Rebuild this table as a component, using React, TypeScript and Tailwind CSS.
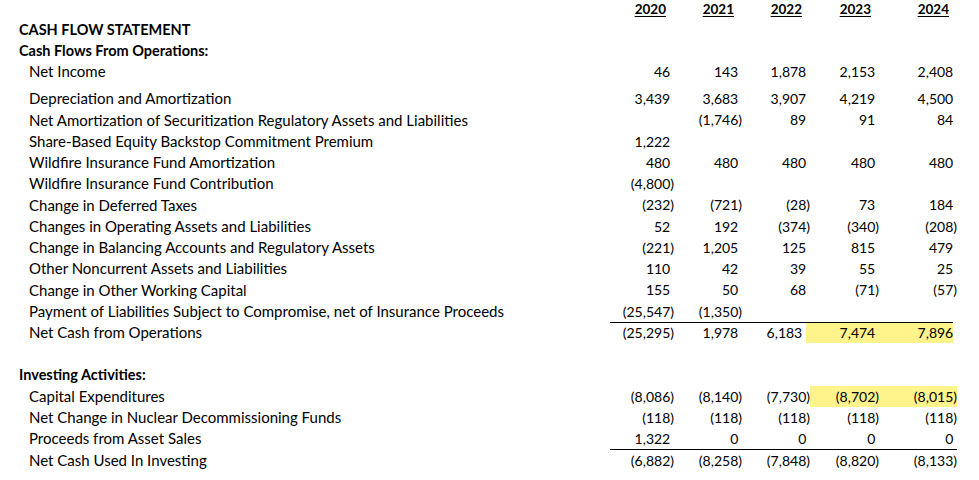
import React from 'react';

type Row = {
  label?: string;
  kind?: 'title' | 'item' | 'blank';
  values?: (string | null)[];
  lineAbove?: boolean;
  highlight?: 'ops' | 'capex';
  h?: string;
};

const rows: Row[] = [
  { label: 'CASH FLOW STATEMENT', kind: 'title', h: 'h-[21px]' },
  { label: 'Cash Flows From Operations:', kind: 'title', h: 'h-[21px]' },
  { label: 'Net Income', values: ['46', '143', '1,878', '2,153', '2,408'], h: 'h-[21px]' },
  { kind: 'blank', h: 'h-[6px]' },
  { label: 'Depreciation and Amortization', values: ['3,439', '3,683', '3,907', '4,219', '4,500'] },
  { label: 'Net Amortization of Securitization Regulatory Assets and Liabilities', values: [null, '(1,746)', '89', '91', '84'] },
  { label: 'Share-Based Equity Backstop Commitment Premium', values: ['1,222', null, null, null, null] },
  { label: 'Wildfire Insurance Fund Amortization', values: ['480', '480', '480', '480', '480'] },
  { label: 'Wildfire Insurance Fund Contribution', values: ['(4,800)', null, null, null, null] },
  { label: 'Change in Deferred Taxes', values: ['(232)', '(721)', '(28)', '73', '184'] },
  { label: 'Changes in Operating Assets and Liabilities', values: ['52', '192', '(374)', '(340)', '(208)'] },
  { label: 'Change in Balancing Accounts and Regulatory Assets', values: ['(221)', '1,205', '125', '815', '479'] },
  { label: 'Other Noncurrent Assets and Liabilities', values: ['110', '42', '39', '55', '25'] },
  { label: 'Change in Other Working Capital', values: ['155', '50', '68', '(71)', '(57)'] },
  { label: 'Payment of Liabilities Subject to Compromise, net of Insurance Proceeds', values: ['(25,547)', '(1,350)', null, null, null] },
  { label: 'Net Cash from Operations', values: ['(25,295)', '1,978', '6,183', '7,474', '7,896'], lineAbove: true, highlight: 'ops' },
  { kind: 'blank' },
  { label: 'Investing Activities:', kind: 'title' },
  { label: 'Capital Expenditures', values: ['(8,086)', '(8,140)', '(7,730)', '(8,702)', '(8,015)'], highlight: 'capex' },
  { label: 'Net Change in Nuclear Decommissioning Funds', values: ['(118)', '(118)', '(118)', '(118)', '(118)'] },
  { label: 'Proceeds from Asset Sales', values: ['1,322', '0', '0', '0', '0'] },
  { label: 'Net Cash Used In Investing', values: ['(6,882)', '(8,258)', '(7,848)', '(8,820)', '(8,133)'], lineAbove: true },
];

const colW = ['w-[64px]', 'w-[68px]', 'w-[68px]', 'w-[69px]', 'w-[78px]'];
const years = ['2020', '2021', '2022', '2023', '2024'];

function Num({ v }: { v: string | null }) {
  if (!v) return null;
  const neg = v.startsWith('(');
  return (
    <span>
      {v}
      {!neg && <span className="invisible">)</span>}
    </span>
  );
}

function Cells({ row }: { row: Row }) {
  const vals = row.values ?? [null, null, null, null, null];
  const cell = (i: number) => (
    <div key={i} className={`${colW[i]} shrink-0 text-right`}>
      <Num v={vals[i]} />
    </div>
  );
  if (row.highlight === 'ops') {
    return (
      <div className="flex h-full items-center">
        {cell(0)}
        {cell(1)}
        <div className="w-[64px] shrink-0 text-right">
          <Num v={vals[2]} />
        </div>
        <div className="flex h-full items-center bg-[#fff38c]">
          <div className="w-[73px] shrink-0 text-right">
            <Num v={vals[3]} />
          </div>
          <div className="w-[74px] shrink-0 text-right">
            <span className="-mr-[4px]">
              <Num v={vals[4]} />
            </span>
          </div>
        </div>
      </div>
    );
  }
  if (row.highlight === 'capex') {
    return (
      <div className="flex h-full items-center">
        {cell(0)}
        {cell(1)}
        {cell(2)}
        <div className="flex h-full items-center bg-[#fff38c]">
          {cell(3)}
          {cell(4)}
        </div>
      </div>
    );
  }
  return <div className="flex h-full items-center">{[0, 1, 2, 3, 4].map((i) => cell(i))}</div>;
}

export default function App() {
  return (
    <div
      className="w-[979px] h-[480px] bg-white text-black text-[14px] overflow-hidden"
      style={{ fontFamily: 'Lato, "Open Sans", sans-serif' }}
    >
      {/* year headers */}
      <div className="flex h-[19px] items-center">
        <div className="w-[610px] shrink-0" />
        {years.map((y, i) => (
          <div
            key={y}
            className={`${colW[i]} shrink-0 text-right pr-[8px] text-[13.5px] font-bold underline underline-offset-[2px]`}
          >
            {y}
          </div>
        ))}
      </div>

      {rows.map((row, idx) => (
        <div key={idx} className={`flex items-center ${row.h ?? 'h-[21.25px]'}`}>
          <div
            className={`w-[610px] shrink-0 whitespace-nowrap ${
              row.kind === 'title' ? 'pl-[19px] font-bold text-[14.5px]' : 'pl-[29px] text-[15px]'
            }`}
          >
            {row.label}
          </div>
          {row.kind !== 'title' && row.kind !== 'blank' && (
            <div className={`h-full ${row.lineAbove ? 'border-t border-black' : ''}`}>
              <Cells row={row} />
            </div>
          )}
        </div>
      ))}
    </div>
  );
}
